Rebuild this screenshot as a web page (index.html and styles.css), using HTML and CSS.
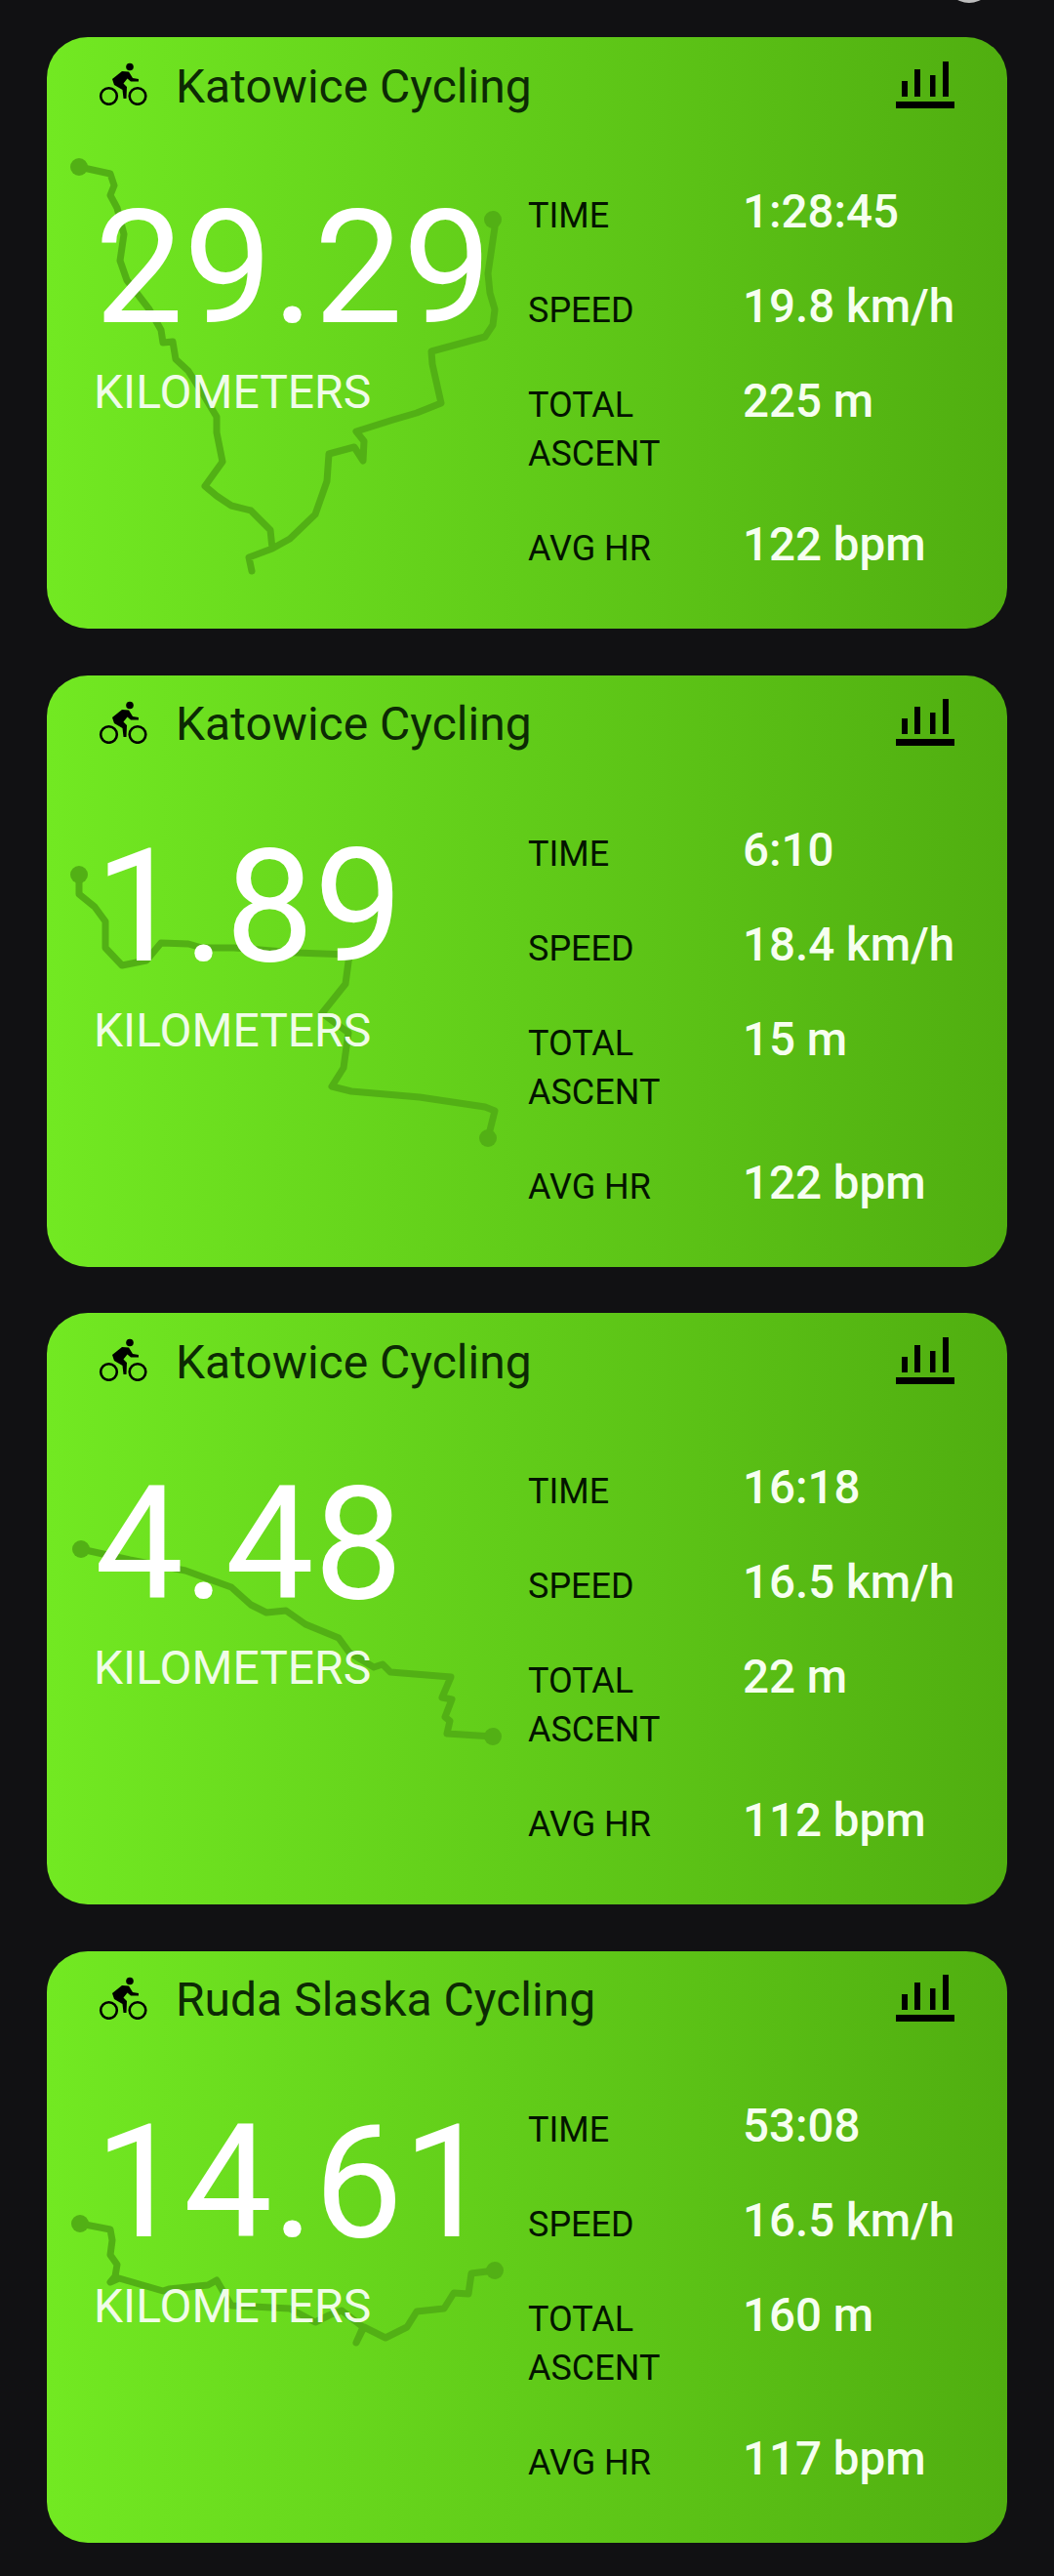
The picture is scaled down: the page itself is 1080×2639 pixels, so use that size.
FILE: index.html
```html
<!DOCTYPE html>
<html>
<head>
<meta name="viewport" content="width=device-width, initial-scale=1">
<link rel="stylesheet" href="styles.css">
</head>
<body>
<div class="camera-dot"></div>

<!-- shared icons -->
<svg class="defs">
  <symbol id="bike" viewBox="0 0 50 44">
    <circle cx="10.5" cy="34.5" r="8.3" fill="none" stroke="#000" stroke-width="2.6"/>
    <circle cx="40" cy="34.5" r="8.3" fill="none" stroke="#000" stroke-width="2.6"/>
    <circle cx="32" cy="4.5" r="3.8"/>
    <path d="M14 17 L24 9 L31 9.5 L35 16 L41 17 L41 19.5 L33 19.5 L29.5 16.5 L25.5 21.5 L29 25 L28.5 37 L25.5 37 L24.5 28 L16 23 Z"/>
  </symbol>
  <symbol id="chart" viewBox="0 0 60 48">
    <rect x="0" y="41" width="60" height="7"/>
    <rect x="6" y="20" width="6" height="16"/>
    <rect x="19" y="8" width="6" height="28"/>
    <rect x="35" y="14" width="5.5" height="22"/>
    <rect x="48" y="0" width="6" height="36"/>
  </symbol>
</svg>

<div class="card">
  <svg class="route" viewBox="0 0 984 605">
    <polyline points="33,133 65,140 69,152 65,162 72,175 79,202 75,229 82,249 105,279 117,300 119,313 129,312 132,330 145,342 162,369 174,389 174,405 180,435 162,460 174,470 189,480 209,485 229,505 231,524 207,533 210,547 207,533 231,524 249,514 275,489 287,455 289,427 315,420 324,434 325,414 317,404 355,392 379,385 404,375 395,335 394,322 449,307 457,295 459,279 454,262 452,242 459,195 457,187"/>
    <circle cx="33" cy="133" r="9"/>
    <circle cx="457" cy="187" r="9"/>
  </svg>
  <div class="card-head">
    <svg class="icon-bike"><use href="#bike"/></svg>
    <span class="title">Katowice Cycling</span>
    <svg class="icon-chart"><use href="#chart"/></svg>
  </div>
  <div class="card-body">
    <div class="distance">
      <div class="km">29.29</div>
      <div class="km-label">KILOMETERS</div>
    </div>
    <div class="stats">
      <div class="label">TIME</div><div class="value">1:28:45</div>
      <div class="label">SPEED</div><div class="value">19.8 km/h</div>
      <div class="label">TOTAL<br>ASCENT</div><div class="value">225 m</div>
      <div class="label">AVG HR</div><div class="value">122 bpm</div>
    </div>
  </div>
</div>

<div class="card">
  <svg class="route" viewBox="0 0 984 605">
    <polyline points="33,204 33,224 49,237 60,252 60,279 77,297 102,292 117,274 145,275 159,279 192,279 255,284 310,286 306,316 282,346 309,366 304,402 292,421 312,426 382,432 449,442 459,446 452,474"/>
    <circle cx="33" cy="204" r="9"/>
    <circle cx="452" cy="474" r="9"/>
  </svg>
  <div class="card-head">
    <svg class="icon-bike"><use href="#bike"/></svg>
    <span class="title">Katowice Cycling</span>
    <svg class="icon-chart"><use href="#chart"/></svg>
  </div>
  <div class="card-body">
    <div class="distance">
      <div class="km">1.89</div>
      <div class="km-label">KILOMETERS</div>
    </div>
    <div class="stats">
      <div class="label">TIME</div><div class="value">6:10</div>
      <div class="label">SPEED</div><div class="value">18.4 km/h</div>
      <div class="label">TOTAL<br>ASCENT</div><div class="value">15 m</div>
      <div class="label">AVG HR</div><div class="value">122 bpm</div>
    </div>
  </div>
</div>

<div class="card">
  <svg class="route" viewBox="0 0 984 605">
    <polyline points="35,242 85,253 142,264 189,281 209,299 225,307 245,305 265,319 299,333 310,348 335,363 344,360 352,368 414,373 405,394 415,396 408,414 413,418 410,431 457,434"/>
    <circle cx="35" cy="242" r="9"/>
    <circle cx="457" cy="434" r="9"/>
  </svg>
  <div class="card-head">
    <svg class="icon-bike"><use href="#bike"/></svg>
    <span class="title">Katowice Cycling</span>
    <svg class="icon-chart"><use href="#chart"/></svg>
  </div>
  <div class="card-body">
    <div class="distance">
      <div class="km">4.48</div>
      <div class="km-label">KILOMETERS</div>
    </div>
    <div class="stats">
      <div class="label">TIME</div><div class="value">16:18</div>
      <div class="label">SPEED</div><div class="value">16.5 km/h</div>
      <div class="label">TOTAL<br>ASCENT</div><div class="value">22 m</div>
      <div class="label">AVG HR</div><div class="value">112 bpm</div>
    </div>
  </div>
</div>

<div class="card">
  <svg class="route" viewBox="0 0 984 605">
    <polyline points="34,279 65,285 67,296 65,311 72,321 70,333 65,339 74,335 119,348 125,346 165,342 174,337 189,363 249,366 275,380 289,373 302,368 324,385 317,401 325,385 347,396 369,385 379,369 407,366 417,350 432,351 435,330 459,327"/>
    <circle cx="34" cy="279" r="9"/>
    <circle cx="459" cy="327" r="9"/>
  </svg>
  <div class="card-head">
    <svg class="icon-bike"><use href="#bike"/></svg>
    <span class="title">Ruda Slaska Cycling</span>
    <svg class="icon-chart"><use href="#chart"/></svg>
  </div>
  <div class="card-body">
    <div class="distance">
      <div class="km">14.61</div>
      <div class="km-label">KILOMETERS</div>
    </div>
    <div class="stats">
      <div class="label">TIME</div><div class="value">53:08</div>
      <div class="label">SPEED</div><div class="value">16.5 km/h</div>
      <div class="label">TOTAL<br>ASCENT</div><div class="value">160 m</div>
      <div class="label">AVG HR</div><div class="value">117 bpm</div>
    </div>
  </div>
</div>

</body>
</html>
```

FILE: styles.css
```css
* {box-sizing: border-box}

html, body {
  height: 100%;
  margin: 0;
  font-family: Roboto, sans-serif;
}
body {
  position: relative;
  overflow: hidden;
  background-color: #111113;
  display: flex;
  flex-direction: column;
  gap: 47.5px;
  padding: 38px 48px 0;
}

/* bit of the camera cutout peeking in at the top */
.camera-dot {
  position: absolute;
  top: -47px;
  left: 968px;
  width: 50px;
  height: 50px;
  border-radius: 50%;
  background-color: #bdbdbd;
}

.defs {
  display: none;
}

.card {
  position: relative;
  flex: none;
  height: 606px;
  border-radius: 42px;
  overflow: hidden;
  background: linear-gradient(90deg, #72e922, #50ae10);
}

.route {
  position: absolute;
  top: 0;
  left: 0;
  width: 984px;
  height: 605px;
}
.route polyline {
  fill: none;
  stroke: #52b015;
  stroke-width: 7;
  stroke-linejoin: round;
}
.route circle {
  fill: #52b015;
}

.card-head {
  position: relative;
  display: flex;
  align-items: center;
  height: 102px;
  padding: 0 54px 0 53px;
}
.icon-bike {
  width: 50px;
  height: 44px;
  margin-bottom: 6px;
}
.title {
  margin-left: 29px;
  margin-bottom: 2px;
  font-size: 48px;
  color: #0c2a04;
}
.icon-chart {
  width: 60px;
  height: 48px;
  margin-left: auto;
  margin-bottom: 5px;
}

.card-body {
  position: relative;
  display: flex;
}

.distance {
  width: 493px;
  padding: 53px 0 0 49px;
}
.km {
  font-size: 162px;
  line-height: 164px;
  color: #fff;
}
.km-label {
  margin-top: 20px;
  margin-left: -1px;
  font-size: 48px;
  line-height: 50px;
  color: #f0fce8;
}

.stats {
  display: grid;
  grid-template-columns: 220px 1fr;
  row-gap: 47px;
  padding-top: 56px;
}
.label {
  font-size: 36px;
  line-height: 50px;
  color: #031400;
}
.value {
  font-size: 47.5px;
  line-height: 50px;
  font-weight: 500;
  color: #f6fff0;
  margin-top: -4px;
}
```
